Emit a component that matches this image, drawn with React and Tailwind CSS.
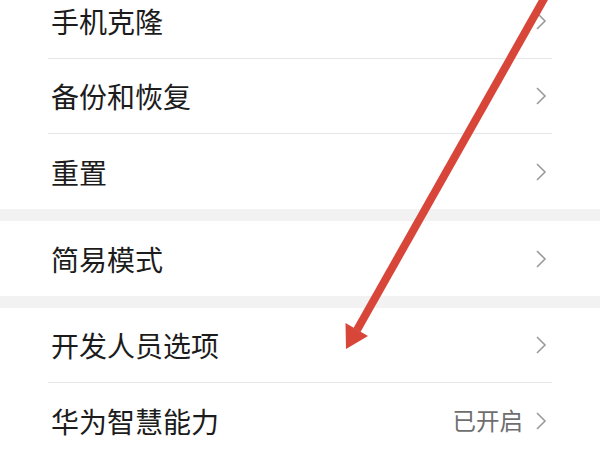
import React from "react";

const font = { fontFamily: '"Noto Sans CJK SC", "Noto Sans", sans-serif' };

function Chevron() {
  return (
    <svg width="12" height="20" viewBox="0 0 12 20" className="shrink-0">
      <polyline points="2,2 10,10 2,18" fill="none" stroke="#9a9a9a" strokeWidth="1.6" strokeLinejoin="miter" />
    </svg>
  );
}

function Row({ label, value, border }) {
  return (
    <div className="px-[48px] bg-white">
      <div className={`h-[75px] flex items-center justify-between pl-[3px] pr-[5px] ${border ? "border-b border-[#e6e6e6]" : ""}`}>
        <span className="text-[28px] leading-none text-[#1c1c1c]">{label}</span>
        <div className="flex items-center gap-[12px]">
          {value && <span className="text-[23.5px] leading-none text-[#6e6e6e]">{value}</span>}
          <Chevron />
        </div>
      </div>
    </div>
  );
}

function Band() {
  return <div className="h-[12px] bg-[#f2f2f2]" />;
}

export default function App() {
  return (
    <div className="relative w-[600px] h-[450px] overflow-hidden bg-white" style={font}>
      <div className="-mt-[16px] flex flex-col">
        <Row label="手机克隆" border />
        <Row label="备份和恢复" border />
        <Row label="重置" />
        <Band />
        <Row label="简易模式" />
        <Band />
        <Row label="开发人员选项" border />
        <Row label="华为智慧能力" value="已开启" />
      </div>
      <svg className="absolute inset-0 pointer-events-none" width="600" height="450" viewBox="0 0 600 450">
        <line x1="549" y1="-10" x2="357" y2="330" stroke="#d8463a" strokeWidth="8" />
        <polygon points="346,349 345.5,323 368,336" fill="#d8463a" />
      </svg>
    </div>
  );
}
